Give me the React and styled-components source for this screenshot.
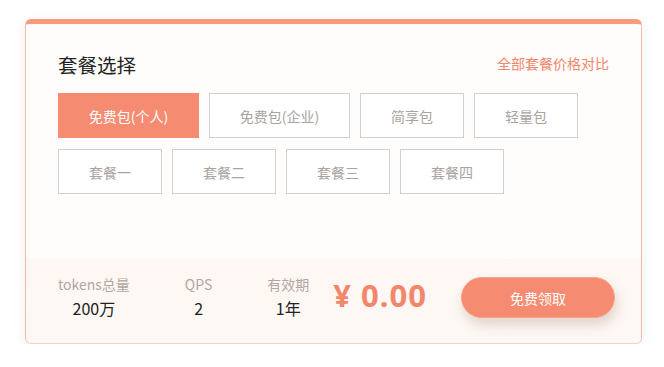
import React, { useState } from 'react'
import styled, { createGlobalStyle } from 'styled-components'

const GlobalStyle = createGlobalStyle`
  html, body {
    margin: 0;
    padding: 0;
    background: #ffffff;
    font-family: "Noto Sans CJK SC", "Noto Sans", sans-serif;
  }
`

const Page = styled.div`
  padding: 19px 0 0 25px;
`

const Card = styled.div`
  width: 617px;
  height: 325px;
  box-sizing: border-box;
  display: flex;
  flex-direction: column;
  background: #fffcfc;
  border: 1px solid #f5b9a6;
  border-bottom-color: #f8cfc4;
  border-top: 5px solid #f89a7e;
  border-radius: 6px;
  box-shadow: 0 3px 14px rgba(0, 0, 0, 0.07);
  overflow: hidden;
`

const Top = styled.div`
  flex: 1;
  padding: 28px 32px 0 32px;
`

const Header = styled.div`
  display: flex;
  align-items: center;
  justify-content: space-between;
  height: 26px;
`

const Title = styled.h2`
  margin: 0;
  font-size: 19.5px;
  font-weight: 400;
  color: #222;
  line-height: 26px;
`

const CompareLink = styled.a`
  font-size: 14px;
  color: #f0876a;
  text-decoration: none;
  cursor: pointer;
  margin-top: -4px;
`

const Options = styled.div`
  display: flex;
  flex-wrap: wrap;
  gap: 11px 10px;
  margin-top: 15px;
  width: 530px;
`

const Option = styled.button`
  width: ${p => (p.$wide ? '141px' : '104px')};
  height: 45px;
  box-sizing: border-box;
  border: 1px solid ${p => (p.$active ? '#f58b70' : '#d2cfcf')};
  background: ${p => (p.$active ? '#f58b70' : '#fff')};
  color: ${p => (p.$active ? '#fff' : '#aaa3a1')};
  font-family: inherit;
  font-size: 14px;
  padding: 0;
  cursor: pointer;
`

const Bottom = styled.div`
  height: 84px;
  box-sizing: border-box;
  display: flex;
  align-items: center;
  padding: 0 26px 8px 32px;
  background: linear-gradient(180deg, #fef7f4 0%, #fdf8f5 100%);
`

const Stats = styled.div`
  display: flex;
  gap: 55px;
`

const Stat = styled.div`
  display: flex;
  flex-direction: column;
  align-items: center;
`

const StatLabel = styled.span`
  font-size: 14px;
  line-height: 22px;
  color: #b2a6a2;
`

const StatValue = styled.span`
  font-size: 16px;
  line-height: 26px;
  color: #222;
`

const Price = styled.div`
  margin-left: 24px;
  font-family: "Noto Sans", "Liberation Sans", sans-serif;
  font-weight: 700;
  font-size: 31px;
  color: #f3876b;
  letter-spacing: 1px;
  margin-top: -4px;
`

const ClaimButton = styled.button`
  margin-left: auto;
  width: 154px;
  height: 41px;
  border-radius: 21px;
  border: 1px solid #f8a487;
  background: #f58b70;
  color: #fff;
  font-family: inherit;
  font-size: 14px;
  box-shadow: 2px 7px 12px rgba(170, 130, 110, 0.3);
  cursor: pointer;
  margin-top: 1px;
`

const plans = [
  { name: '免费包(个人)', wide: true },
  { name: '免费包(企业)', wide: true },
  { name: '简享包' },
  { name: '轻量包' },
  { name: '套餐一' },
  { name: '套餐二' },
  { name: '套餐三' },
  { name: '套餐四' },
]

const stats = [
  { label: 'tokens总量', value: '200万' },
  { label: 'QPS', value: '2' },
  { label: '有效期', value: '1年' },
]

export default function App() {
  const [active, setActive] = useState(0)
  return (
    <Page>
      <GlobalStyle />
      <Card>
        <Top>
          <Header>
            <Title>套餐选择</Title>
            <CompareLink>全部套餐价格对比</CompareLink>
          </Header>
          <Options>
            {plans.map((p, i) => (
              <Option
                key={p.name}
                $wide={p.wide}
                $active={i === active}
                onClick={() => setActive(i)}
              >
                {p.name}
              </Option>
            ))}
          </Options>
        </Top>
        <Bottom>
          <Stats>
            {stats.map(s => (
              <Stat key={s.label}>
                <StatLabel>{s.label}</StatLabel>
                <StatValue>{s.value}</StatValue>
              </Stat>
            ))}
          </Stats>
          <Price>¥ 0.00</Price>
          <ClaimButton>免费领取</ClaimButton>
        </Bottom>
      </Card>
    </Page>
  )
}
